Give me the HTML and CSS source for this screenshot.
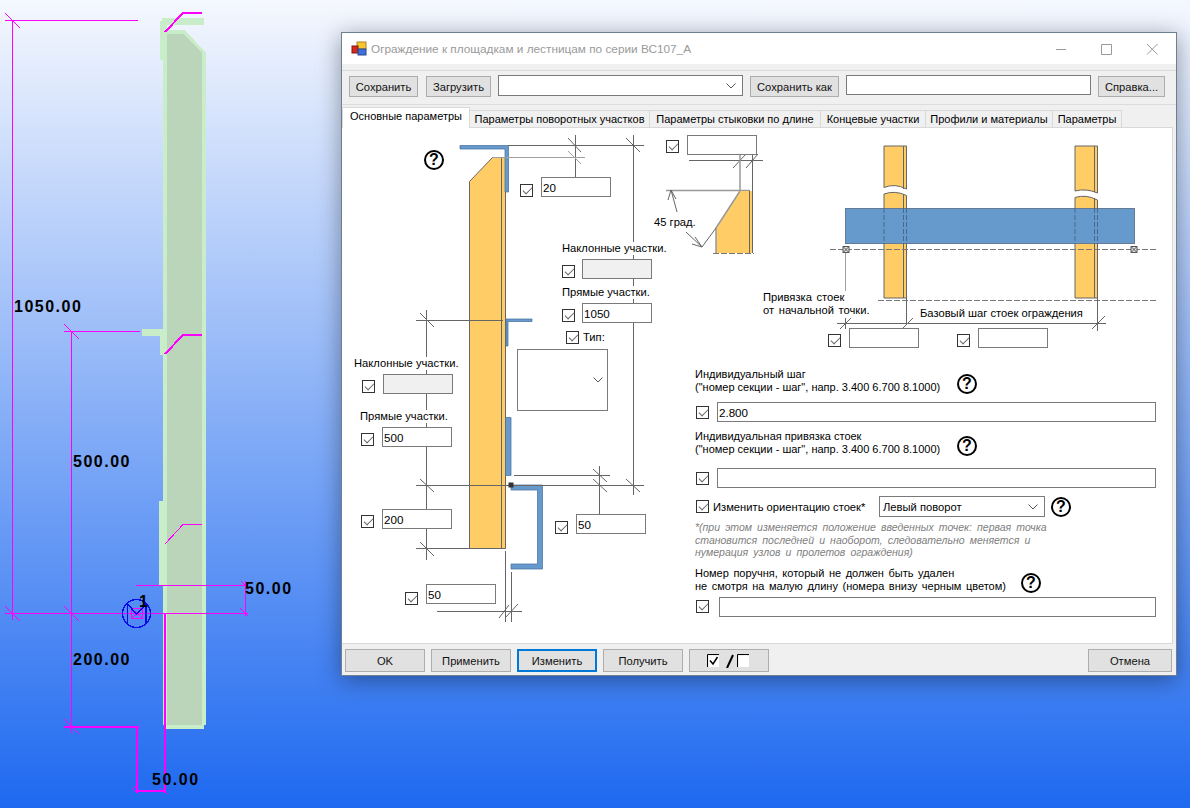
FILE: index.html
```html
<!DOCTYPE html>
<html lang="ru">
<head>
<meta charset="utf-8">
<title>Ограждение</title>
<link rel="stylesheet" href="styles.css">
</head>
<body>
<svg class="cad" width="1190" height="808" viewBox="0 0 1190 808">
  <g class="solid-light">
    <path d="M163 60H167V34H183L202 53H206V725H204V729H165V725H163Z"/>
    <path d="M160 21H162V18H204V25H167V60H160Z"/>
    <path d="M142 329H163V332H167V355H160V336H142Z"/>
    <path d="M159 501H167V586H159Z"/>
    <path d="M163 30H185L206 53V60H163Z"/>
  </g>
  <path class="solid-dark" d="M167 34H183L202 53V725H167Z"/>
  <g class="mag">
    <path d="M5 20.5H138M12.5 20V620M5 13L20 28"/>
    <path d="M64 331.5H140M71.5 331V733M64 324L79 339"/>
    <path d="M5 613.5H248M5 606L20 621M64 606L79 621M240 608L248 616"/>
    <path d="M136 585.5H246M245.5 581V616M241 581L249 589"/>
    <path d="M64 719L79 734M165 544L183 524.5H202"/>
    <path class="mag2" d="M64 726.5H139M136.5 726V793M135 790.5H166M164.5 613V793"/>
    <path class="mag2" d="M165 32L183 13H202M165 354L183 335H202"/>
    <path d="M131.5 608.5H142.5V618.5H131.5ZM131.5 608.5L142.5 618.5M142.5 608.5L131.5 618.5"/>
    <path d="M132 790L136 786M161 788L167 794"/>
  </g>
  <g class="blue">
    <circle cx="136.5" cy="613.5" r="14"/>
    <path d="M127.5 603V624M146 603V624M127.5 604L136.5 614L146 604"/>
  </g>
  <text class="dim" x="14" y="312">1050.00</text>
  <text class="dim" x="73" y="467">500.00</text>
  <text class="dim" x="73" y="665">200.00</text>
  <text class="dim" x="245" y="594">50.00</text>
  <text class="dim" x="152" y="785">50.00</text>
  <text class="dim" x="139" y="607">1</text>
</svg>

<main class="window">
  <header class="titlebar">
    <svg class="app-icon" width="16" height="16" viewBox="0 0 16 16">
      <rect x="6" y="1" width="9" height="7" fill="#f7c52e" stroke="#a88420"/>
      <rect x="1" y="5" width="6" height="7" fill="#d8281c" stroke="#7d1a12"/>
      <rect x="7" y="8" width="8" height="6" fill="#3f6fd8" stroke="#2a4a90"/>
    </svg>
    <span class="title">Ограждение к площадкам и лестницам по серии ВС107_А</span>
    <svg class="winbtn" width="102" height="12" viewBox="0 0 102 12">
      <path d="M0 6.500H10M45.500 1.500H55.500V11.500H45.500ZM91 1L101.500 11.500M101.500 1L91 11.500"/>
    </svg>
  </header>

  <div class="toolbar">
    <button class="btn w69">Сохранить</button>
    <button class="btn w65">Загрузить</button>
    <div class="combo w245"><svg class="chev" width="10" height="6" viewBox="0 0 10 6"><path d="M0.500 0.500L5 5L9.500 0.500"/></svg></div>
    <button class="btn w89">Сохранить как</button>
    <input class="field w245" type="text">
    <button class="btn w67">Справка...</button>
  </div>

  <nav class="tabs">
    <span class="tab active t1">Основные параметры</span>
    <span class="tab t2">Параметры поворотных участков</span>
    <span class="tab t3">Параметры стыковки по длине</span>
    <span class="tab t4">Концевые участки</span>
    <span class="tab t5">Профили и материалы</span>
    <span class="tab t6">Параметры</span>
  </nav>

  <section class="panel">
    <svg class="drawing" width="831" height="517" viewBox="342 127 831 517">
      <!-- left section view -->
      <path class="orange" d="M469.500 181.500L492.500 157.500H505.500V548.500H469.500Z"/>
      <path class="ln" d="M501.500 157.500V548.500"/>
      <path class="steel" d="M460 145.500H508.500V192H505V149H460Z"/>
      <path class="steel" d="M506 319H532V321.500H508V346H506Z"/>
      <path class="steel" d="M505.500 417.500H511V475.500H505.500Z"/>
      <path class="steel" d="M511 485H542.500V569H511V564H537.500V490H511Z"/>
      <path class="ln" d="M508 145.500H644M575.500 135V177M633.500 135V495M568 138L581 152M626 138L640 152"/>
      <path class="lg" d="M493 157.500H585M568 151L581 164"/>
      <path class="ln" d="M416 320.500H503M416 485.500H644M416 548.500H505M426.500 310V560M420 313L434 327M420 479L434 492M420 542L434 556"/>
      <path class="ln" d="M514 475.500H610M599.500 466V514M593 469L607 482M593 479L607 492M626 479L640 492"/>
      <path class="ln" d="M505.500 551V622M511.500 572V622M437 611.500H522M499 618L509 605M505 618L518 604"/>
      <rect class="node" x="508.500" y="482.500" width="5" height="5"/>

      <!-- chamfer detail -->
      <path class="ln" d="M689 160.500H763M733 168L746 154M746 168L758 154M752.500 155V191"/>
      <path class="lg2" d="M666 190.500H750M740 155V190"/>
      <path class="orange-nb" d="M740 191H752V253H716V228Z"/>
      <path class="lg2" d="M740 191L716 228V253"/>
      <path class="ln" d="M749.500 191V253M752.500 191V253M671 190L677 212M671 190L668 200M671 190L676 199"/>
      <path class="dash" d="M713 253.500H754"/>
      <path class="ln" d="M686 232L702 247L716 228M702 247L692 244M702 247L695 237"/>

      <!-- plan view -->
      <path class="orange" d="M884 146H906.500V189Q895 183 884 187.500Z"/>
      <path class="orange" d="M884 194Q895 190 906.500 195.500V298H884Z"/>
      <path class="orange" d="M1075 146H1097.500V193Q1086 188 1075 191Z"/>
      <path class="orange" d="M1075 197.500Q1086 194 1097.500 200V298H1075Z"/>
      <path class="ln" d="M903.500 146V189M903.500 195V298M1094.500 146V192M1094.500 198V298"/>
      <rect class="plate" x="845.500" y="208.500" width="289" height="35"/>
      <path class="dash-d" d="M884 208V244M903.500 208V244M906.500 208V244M1075 208V244M1094.500 208V244M1097.500 208V244"/>
      <path class="dash" d="M830 249.500H1157M878 300.500H1157"/>
      <path class="lg" d="M845.500 253V291"/>
      <path class="marker" d="M843 246.500H849V252.500H843ZM843 246.500L849 252.500M849 246.500L843 252.500M1131 246.500H1137V252.500H1131ZM1131 246.500L1137 252.500M1137 246.500L1131 252.500"/>
      <path class="ln" d="M837 323.500H1106M845.500 318V329M840 329L851 318M906.500 298V323M902 329L913 318M1097.500 298V331M1092 329L1105 316"/>
    </svg>

    <span class="help h-main">?</span>

    <input class="cb c20" type="checkbox" checked><input class="field box b20" type="text" value="20">
    <input class="cb ctop" type="checkbox" checked><input class="field box btop" type="text">
    <span class="lbl l45">45 град.</span>

    <span class="lbl lrn">Наклонные участки.</span>
    <input class="cb crn" type="checkbox" checked><input class="field box brn" type="text" disabled>
    <span class="lbl lrp">Прямые участки.</span>
    <input class="cb crp" type="checkbox" checked><input class="field box brp" type="text" value="1050">
    <input class="cb ctype" type="checkbox" checked><span class="lbl ltype">Тип:</span>
    <div class="typebox"><svg class="chev" width="10" height="6" viewBox="0 0 10 6"><path d="M0.500 0.500L5 5L9.500 0.500"/></svg></div>

    <span class="lbl lln">Наклонные участки.</span>
    <input class="cb cln" type="checkbox" checked><input class="field box bln" type="text" disabled>
    <span class="lbl llp">Прямые участки.</span>
    <input class="cb clp" type="checkbox" checked><input class="field box blp" type="text" value="500">
    <input class="cb c200" type="checkbox" checked><input class="field box b200" type="text" value="200">
    <input class="cb c50a" type="checkbox" checked><input class="field box b50a" type="text" value="50">
    <input class="cb c50b" type="checkbox" checked><input class="field box b50b" type="text" value="50">

    <span class="lbl lanchor wide">Привязка стоек<br>от начальной точки.</span>
    <span class="lbl lbase">Базовый шаг стоек ограждения</span>
    <input class="cb ca" type="checkbox" checked><input class="field box ba" type="text">
    <input class="cb cs" type="checkbox" checked><input class="field box bs" type="text">

    <div class="form">
      <div class="caption cap-a">
        <p class="captext">Индивидуальный шаг<br>("номер секции - шаг", напр. 3.400 6.700 8.1000)</p>
        <span class="help">?</span>
      </div>
      <div class="row"><input class="cb" type="checkbox" checked><input class="field grow" type="text" value="2.800"></div>
      <div class="caption cap-b">
        <p class="captext">Индивидуальная привязка стоек<br>("номер секции - шаг", напр. 3.400 6.700 8.1000)</p>
        <span class="help">?</span>
      </div>
      <div class="row"><input class="cb" type="checkbox" checked><input class="field grow" type="text"></div>
      <div class="row orient">
        <input class="cb" type="checkbox" checked>
        <span class="orient-text">Изменить ориентацию стоек*</span>
        <div class="combo orient-combo"><span>Левый поворот</span><svg class="chev" width="10" height="6" viewBox="0 0 10 6"><path d="M0.500 0.500L5 5L9.500 0.500"/></svg></div>
        <span class="help">?</span>
      </div>
      <p class="note">*(при этом изменяется положение введенных точек: первая точка<br>становится последней и наоборот, следовательно меняется и<br>нумерация узлов и пролетов ограждения)</p>
      <div class="caption cap-c">
        <p class="captext long wide">Номер поручня, который не должен быть удален<br>не смотря на малую длину (номера внизу черным цветом)</p>
        <span class="help">?</span>
      </div>
      <div class="row last"><input class="cb" type="checkbox" checked><input class="field grow" type="text"></div>
    </div>
  </section>

  <footer class="actions">
    <button class="btn act">OK</button>
    <button class="btn act">Применить</button>
    <button class="btn act focus">Изменить</button>
    <button class="btn act">Получить</button>
    <button class="btn act toggle">
      <svg width="44" height="14" viewBox="0 0 44 14">
        <path class="tbox" d="M0.500 13V0.500H12M30.500 13V0.500H42"/>
        <path class="tfill" d="M1.500 1.500H12V13H1.500ZM31.500 1.500H42V13H31.500Z"/>
        <path class="tcheck" d="M3 6.500L6 10L10.500 3"/>
        <path class="tslash" d="M20 14L26 1"/>
      </svg>
    </button>
    <button class="btn cancel">Отмена</button>
  </footer>
</main>
</body>
</html>
```
FILE: styles.css
```css
* { box-sizing: border-box; }

html, body {
  margin: 0;
  height: 100%;
}

body {
  width: 1190px;
  height: 808px;
  overflow: hidden;
  position: relative;
  background: linear-gradient(#f5f8fe, #1e69f0);
  font: 11.200px "Liberation Sans", Arial, sans-serif;
  color: #000;
}

/* CAD canvas */
.cad {
  position: absolute;
  left: 0;
  top: 0;
  shape-rendering: crispEdges;
}
.solid-light path { fill: #c9ecc9; }
.solid-dark { fill: #bad5b9; }
.mag path { fill: none; stroke: #ff00ff; stroke-width: 1; }
.mag .mag2 { stroke-width: 2; }
.blue { fill: none; stroke: #0a0ae6; stroke-width: 1.500; }
.dim {
  font: bold 16px "Liberation Sans", Arial, sans-serif;
  letter-spacing: 1.500px;
  fill: #000;
}

/* Dialog window */
.window {
  position: absolute;
  left: 341px;
  top: 32px;
  width: 836px;
  height: 644px;
  display: flex;
  flex-direction: column;
  background: #f0f0f0;
  border: 1px solid #6f7f92;
  box-shadow: 0 4px 22px rgba(0, 0, 0, .38);
}

.titlebar {
  flex: none;
  height: 31px;
  background: #fff;
  display: flex;
  align-items: center;
  padding-left: 9px;
}
.app-icon { flex: none; margin-right: 4px; }
.title { color: #9a9a9a; white-space: nowrap; font-size: 11.800px; }
.winbtn {
  margin-left: auto;
  margin-right: 18px;
  fill: none;
  stroke: #9a9a9a;
}

.toolbar {
  flex: none;
  height: 35px;
  margin-top: 6px;
  border-top: 1px solid #dcdcdc;
  border-bottom: 1px solid #dcdcdc;
  display: flex;
  align-items: flex-start;
  gap: 7px;
  padding: 4px 0 0 7px;
}
.toolbar .btn { margin-top: 1px; }

.btn {
  height: 21px;
  padding: 0;
  background: #e1e1e1;
  border: 1px solid #adadad;
  font: inherit;
  color: #111;
}
.w69 { width: 69px; margin-right: 1px; }
.w65 { width: 65px; }
.w89 { width: 89px; }
.w67 { width: 67px; }
.w245 { width: 245px; }

.field {
  height: 20px;
  background: #fff;
  border: 1px solid #7a7a7a;
  border-radius: 0;
  padding: 0 1px;
  font: inherit;
  font-size: 11.600px;
  color: #000;
  outline: none;
}
.field:disabled { background: #f0f0f0; }

.combo {
  height: 21px;
  background: #fff;
  border: 1px solid #7a7a7a;
  display: flex;
  align-items: center;
  justify-content: flex-end;
  padding: 0 6px 0 3px;
}
.chev { fill: none; stroke: #555; flex: none; }

.tabs {
  flex: none;
  height: 22px;
  display: flex;
  align-items: flex-end;
  position: relative;
  z-index: 1;
}
.tab {
  height: 18px;
  line-height: 16px;
  text-align: center;
  white-space: nowrap;
  background: #f0f0f0;
  border: 1px solid #d9d9d9;
  border-left: 0;
  margin-bottom: -1px;
  font-size: 11px;
}
.tab.active {
  height: 21px;
  line-height: 17px;
  background: #fff;
  border-bottom: 0;
  border-left: 1px solid #d9d9d9;
  margin-bottom: -1px;
}
.t1 { width: 128px; }
.t2 { width: 180px; }
.t3 { width: 171px; }
.t4 { width: 105px; }
.t5 { width: 127px; }
.t6 { width: 69px; }

.panel {
  flex: none;
  position: relative;
  width: 831px;
  height: 517px;
  background: #fff;
  border-right: 1px solid #d9d9d9;
  border-bottom: 1px solid #d9d9d9;
  border-top: 1px solid #d9d9d9;
  padding: 240px 0 0 353px;
}

.drawing {
  position: absolute;
  left: 0;
  top: -1px;
}
.orange { fill: #ffcc66; stroke: #666; stroke-width: 1; }
.orange-nb { fill: #ffcc66; }
.plate { fill: #6699cc; stroke: #667b91; }
.steel { fill: #6699cc; stroke: #4a73a0; stroke-width: .75; }
.ln { fill: none; stroke: #666; stroke-width: 1; }
.lg { fill: none; stroke: #a0a0a0; stroke-width: 1; }
.lg2 { fill: none; stroke: #999; stroke-width: 1.500; }
.dash { fill: none; stroke: #777; stroke-dasharray: 6 2; }
.dash-d { fill: none; stroke: #476a8c; stroke-dasharray: 5 2; }
.marker { fill: #e5e5e5; stroke: #555; }
.node { fill: #333; }

/* Diagram controls */
.cb {
  appearance: none;
  margin: 0;
  width: 13px;
  height: 13px;
  flex: none;
  background: #fff;
  border: 1px solid #333;
  position: relative;
}
.cb::after {
  content: "";
  position: absolute;
  left: 4px;
  top: 0;
  width: 4px;
  height: 8px;
  border: solid #666;
  border-width: 0 1px 1px 0;
  transform: rotate(45deg);
}

.panel > .cb,
.panel > .box,
.panel > .lbl,
.panel > .help,
.typebox { position: absolute; }

.box { width: 70px; }
.lbl { white-space: nowrap; background: #fff; line-height: 13px; }
.wide { word-spacing: 1.500px; }

.help {
  flex: none;
  width: 20px;
  height: 20px;
  border: 2px solid #000;
  border-radius: 50%;
  background: #fff;
  display: flex;
  align-items: center;
  justify-content: center;
  font: bold 16px "Liberation Sans", sans-serif;
}
.h-main { left: 82px; top: 22px; }

.c20 { left: 178px; top: 56px; }
.b20 { left: 199px; top: 49px; }
.ctop { left: 324px; top: 12px; }
.btop { left: 345px; top: 7px; }
.l45 { left: 312px; top: 88px; }

.lrn { left: 220px; top: 114px; }
.crn { left: 220px; top: 137px; }
.brn { left: 240px; top: 131px; }
.lrp { left: 220px; top: 158px; }
.crp { left: 220px; top: 181px; }
.brp { left: 240px; top: 175px; }
.ctype { left: 224px; top: 203px; }
.ltype { left: 241px; top: 203px; }
.typebox {
  left: 175px;
  top: 221px;
  width: 91px;
  height: 62px;
  background: #fff;
  border: 1px solid #7a7a7a;
  display: flex;
  align-items: center;
  justify-content: flex-end;
  padding-right: 4px;
}

.lln { left: 12px; top: 229px; }
.cln { left: 20px; top: 252px; }
.bln { left: 41px; top: 246px; }
.llp { left: 18px; top: 282px; }
.clp { left: 19px; top: 305px; }
.blp { left: 40px; top: 299px; }
.c200 { left: 19px; top: 387px; }
.b200 { left: 40px; top: 381px; }
.c50a { left: 63px; top: 464px; }
.b50a { left: 84px; top: 456px; }
.c50b { left: 213px; top: 393px; }
.b50b { left: 234px; top: 386px; }

.lanchor { left: 421px; top: 163px; }
.lbase { left: 578px; top: 179px; }
.ca { left: 486px; top: 206px; }
.ba { left: 507px; top: 200px; }
.cs { left: 615px; top: 206px; }
.bs { left: 636px; top: 200px; }

/* Lower right form */
.form {
  position: relative;
  width: 461px;
  display: flex;
  flex-direction: column;
}
.caption {
  display: flex;
  align-items: flex-end;
}
.captext {
  margin: 0;
  width: 262px;
  font-size: 11px;
  line-height: 13px;
  white-space: nowrap;
}
.captext.long { width: 326px; }
.cap-a { margin-bottom: 8px; }
.cap-b { margin-top: 8px; margin-bottom: 12px; }
.cap-c { margin-top: 8px; margin-bottom: 4px; }
.row {
  display: flex;
  align-items: center;
  gap: 8px;
  padding-left: 1px;
  height: 20px;
}
.grow { flex: 1; min-width: 0; }
.row.last { gap: 10px; }
.orient { margin-top: 8px; height: 21px; gap: 0; }
.orient-text { width: 170px; padding-left: 4px; white-space: nowrap; }
.orient-combo {
  width: 166px;
  justify-content: space-between;
  margin-right: 6px;
}
.note {
  margin: 4px 0 0;
  font-style: italic;
  font-size: 10.500px;
  line-height: 12.500px;
  color: #808080;
  white-space: nowrap;
  word-spacing: 2.200px;
}

.actions {
  flex: none;
  display: flex;
  gap: 6px;
  padding: 5px 3px 0;
}
.act { width: 80px; height: 23px; }
.focus { border: 2px solid #0078d7; }
.toggle { display: flex; align-items: center; justify-content: center; }
.cancel { width: 84px; height: 23px; margin-left: auto; margin-right: 1px; }
.tbox { fill: none; stroke: #000; }
.tfill { fill: #fff; }
.tcheck { fill: none; stroke: #000; stroke-width: 1.500; }
.tslash { fill: none; stroke: #000; stroke-width: 2; }
```
